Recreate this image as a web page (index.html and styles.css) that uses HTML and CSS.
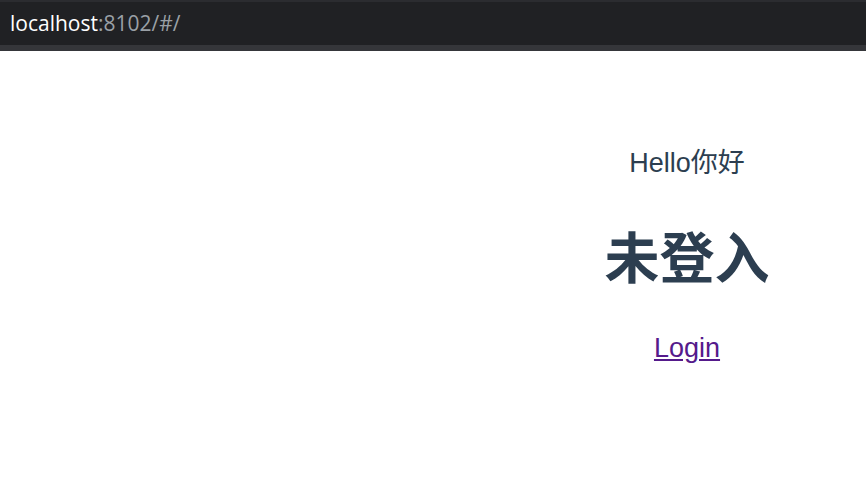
FILE: index.html
```html
<!DOCTYPE html>
<html lang="en">
<head>
  <meta charset="UTF-8" />
  <meta name="viewport" content="width=device-width, initial-scale=1.0"/>
  <title>Home</title>
  <link rel="stylesheet" href="styles.css">
</head>
<body>

  <!-- Address bar -->
  <div class="address-bar">
    <span class="host">localhost</span><span class="path">:8102/#/</span>
  </div>

  <div class="page">
    <div class="side"></div>

    <!-- App -->
    <div id="app">
      <p class="greet">Hello你好</p>
      <h1 class="status">未登入</h1>
      <a class="login-link" href="#/login">Login</a>
    </div>
  </div>

</body>
</html>
```

FILE: styles.css
```css
body {
  margin: 0;
  background: white;
  font-family: "Liberation Sans", Arial, "Noto Sans CJK SC", sans-serif;
}

.address-bar {
  height: 42px;
  background: #202124;
  border-top: 2px solid #2b2c30;
  border-bottom: 6px solid #35363a;
  display: flex;
  align-items: center;
  padding-left: 10px;
  padding-bottom: 1px;
  box-sizing: content-box;
  font-family: "Open Sans", "Noto Sans", sans-serif;
  font-size: 21px;
}

.host {
  color: #ffffff;
}

.path {
  color: #9aa0a6;
}

.page {
  display: grid;
  grid-template-columns: 508px 1fr;
}

#app {
  text-align: center;
  color: #2c3e50;
  padding-top: 90px;
}

.greet {
  font-size: 27px;
  margin: 0;
}

.status {
  font-size: 55px;
  font-weight: bold;
  margin: 34px 0 39px;
}

.login-link {
  font-size: 27px;
  color: #551a8b;
}
```
